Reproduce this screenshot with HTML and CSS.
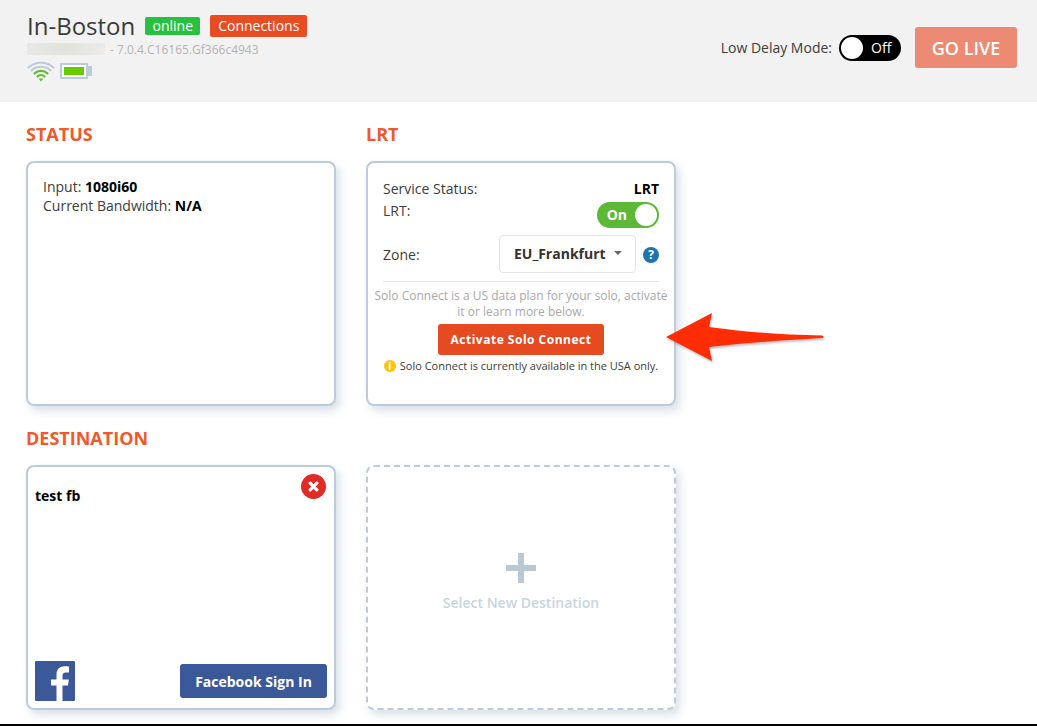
FILE: index.html
```html
<!DOCTYPE html>
<html lang="en">
<head>
<meta charset="utf-8">
<title>In-Boston</title>
<link rel="stylesheet" href="styles.css">
</head>
<body>
<div class="page">
  <header class="topbar">
    <div class="identity">
      <div class="title-row">
        <h1 class="title">In-Boston</h1>
        <span class="badge badge-online">online</span>
        <span class="badge badge-conn">Connections</span>
      </div>
      <div class="serial-row"><span class="blur-block"></span><span class="version">- 7.0.4.C16165.Gf366c4943</span></div>
      <div class="status-icons">
        <svg class="wifi" width="28" height="22" viewBox="0 0 28 22" fill="none" stroke-linecap="round">
          <path d="M1.500 7.500C8 1 20 1 26.500 7.500" stroke="#bccbdb" stroke-width="2"/>
          <path d="M4.500 10.500C9.500 5.500 18.500 5.500 23.500 10.500" stroke="#bccbdb" stroke-width="2"/>
          <path d="M7.500 13.500C11 10 17 10 20.500 13.500" stroke="#62bb2f" stroke-width="2.200"/>
          <path d="M10.500 16.500C12.500 14.700 15.500 14.700 17.500 16.500" stroke="#62bb2f" stroke-width="2.200"/>
          <path d="M11.500 18.500H16.500L14 21.500Z" fill="#62bb2f"/>
        </svg>
        <span class="battery"><span class="battery-fill"></span></span><span class="battery-tip"></span>
      </div>
    </div>
    <div class="live-controls">
      <span class="delay-label">Low Delay Mode:</span>
      <span class="toggle-off"><span class="knob"></span><span class="toggle-off-text">Off</span></span>
      <button class="go-live">GO LIVE</button>
    </div>
  </header>

  <main class="content">
    <section class="row">
      <div class="col">
        <h2 class="heading">STATUS</h2>
        <div class="card card-status">
          <div>Input: <b>1080i60</b></div>
          <div>Current Bandwidth: <b>N/A</b></div>
        </div>
      </div>
      <div class="col">
        <h2 class="heading">LRT</h2>
        <div class="card card-lrt">
          <div class="line service"><span>Service Status:</span><b class="lrt-value">LRT</b></div>
          <div class="line lrt-line"><span>LRT:</span><span class="toggle-on"><span class="toggle-on-text">On</span><span class="knob"></span></span></div>
          <div class="line zone">
            <span>Zone:</span>
            <span class="zone-controls">
              <span class="select">EU_Frankfurt<span class="caret"></span></span>
              <span class="help">?</span>
            </span>
          </div>
          <div class="solo">
            <p class="solo-text">Solo Connect is a US data plan for your solo, activate it or learn more below.</p>
            <button class="activate">Activate Solo Connect</button>
            <p class="solo-note"><span class="info">i</span>Solo Connect is currently available in the USA only.</p>
          </div>
        </div>
      </div>
    </section>
    <h2 class="heading heading-dest">DESTINATION</h2>
    <section class="row">
      <div class="card card-dest">
        <span class="close">
          <svg width="11" height="11" viewBox="0 0 10 10"><path d="M2 2L8 8M8 2L2 8" stroke="#fff" stroke-width="3" stroke-linecap="round"/></svg>
        </span>
        <div class="dest-name">test fb</div>
        <div class="dest-foot">
          <svg class="fb" width="40" height="40" viewBox="0 0 40 40">
            <rect width="40" height="40" rx="1" fill="#3b5998"/>
            <path d="M27.500 40V24.500H33L33.800 18.500H27.500V14.800C27.500 13 28.300 11.500 30.800 11.500H34V5.500C33 5.400 31.500 5.200 29.500 5.200C25 5.200 21.500 8 21.500 13.500V18.500H16V24.500H21.500V40Z" fill="#fff"/>
          </svg>
          <button class="fb-signin">Facebook Sign In</button>
        </div>
      </div>
      <div class="card card-new">
        <svg class="plus" width="30" height="30" viewBox="0 0 30 30"><path d="M12 0H18V12H30V18H18V30H12V18H0V12H12Z" fill="#bac8d6"/></svg>
        <div class="new-label">Select New Destination</div>
      </div>
    </section>
  </main>
  <svg class="arrow" width="170" height="60" viewBox="0 0 170 60">
    <path d="M1 25L47 1L44 15C80 20 120 23 157 23.500C159 24 159 26 157 26C120 28 80 31 44 35L47 49Z" fill="#ff2d05"/>
  </svg>
</div>
</body>
</html>
```
FILE: styles.css
```css
* { box-sizing: border-box; }
html, body { margin: 0; padding: 0; }
body {
  background: #000;
  font-family: "Open Sans", "Liberation Sans", sans-serif;
  font-size: 14px;
  color: #3c3c3c;
}
.page {
  position: relative;
  width: 1037px;
  height: 724px;
  background: #fff;
  overflow: hidden;
}
.topbar {
  height: 102px;
  background: #f2f2f2;
  padding: 13px 20px 0 27px;
  display: flex;
  justify-content: space-between;
  align-items: flex-start;
}
.title-row { display: flex; align-items: flex-start; height: 27px; }
.title {
  margin: 0;
  font-size: 24px;
  font-weight: 400;
  line-height: 26px;
  color: #3a3a3a;
}
.badge {
  color: #fff;
  border-radius: 2px;
  font-size: 14px;
  text-align: center;
}
.badge-online {
  background: #27c13f;
  width: 55px;
  height: 18px;
  line-height: 18px;
  margin: 4px 0 0 10px;
}
.badge-conn {
  background: #e84c22;
  width: 97px;
  height: 22px;
  line-height: 22px;
  margin: 2px 0 0 10px;
}
.serial-row { display: flex; align-items: center; height: 16px; margin-top: 1px; }
.blur-block {
  width: 78px;
  height: 12px;
  background: linear-gradient(90deg, #e8e8e6, #e0e2dc 50%, #ecebea);
}
.version { font-size: 12px; color: #b3b3b3; margin-left: 5px; }
.status-icons { display: flex; align-items: center; margin: 3px 0 0 0; }
.wifi { display: block; }
.battery {
  width: 28px;
  height: 16px;
  border: 2px solid #bccbdb;
  margin-left: 5px;
  padding: 2px;
  background: #fff;
  display: block;
}
.battery-fill { display: block; width: 100%; height: 100%; background: #66cc00; }
.battery-tip { width: 4px; height: 10px; background: #bccbdb; display: block; }
.live-controls { display: flex; align-items: center; margin-top: 14px; }
.delay-label { font-size: 14px; color: #3c3c3c; }
.toggle-off {
  width: 62px;
  height: 26px;
  background: #000;
  border-radius: 13px;
  margin-left: 7px;
  padding: 2px;
  display: flex;
  align-items: center;
}
.knob {
  width: 22px;
  height: 22px;
  background: #fff;
  border-radius: 50%;
  display: block;
  flex: none;
}
.toggle-off-text { color: #fff; font-size: 14px; margin-left: 8px; }
.go-live {
  width: 102px;
  height: 41px;
  margin-left: 14px;
  border: 0;
  border-radius: 3px;
  background: #ec8a73;
  color: #fff;
  font-family: inherit;
  font-size: 18px;
  font-weight: 600;
  padding: 0;
}
.content { padding: 21px 0 0 26px; }
.row { display: flex; gap: 30px; }
.col { width: 310px; }
.heading {
  margin: 0 0 15px;
  height: 23px;
  font-size: 18px;
  line-height: 23px;
  font-weight: 700;
  color: #f2582c;
}
.heading-dest { margin: 21px 0 15px; }
.card {
  width: 310px;
  height: 245px;
  background: #fff;
  border: 2px solid #bccbdb;
  border-radius: 8px;
  box-shadow: 4px 5px 8px rgba(150, 170, 190, .35);
}
.card b { color: #000; font-weight: 700; }
.card-status { padding: 14px 15px; line-height: 19px; }
.card-lrt { padding: 17px 15px 0; }
.line { display: flex; justify-content: space-between; }
.service { height: 18px; line-height: 18px; }
.lrt-line { height: 24px; line-height: 18px; margin-top: 4px; }
.toggle-on {
  width: 62px;
  height: 26px;
  background: #5cb836;
  border-radius: 13px;
  display: flex;
  align-items: center;
  justify-content: flex-end;
  padding: 2px;
}
.toggle-on-text { color: #fff; font-weight: 700; font-size: 14px; margin-right: 8px; }
.zone { align-items: center; height: 38px; margin-top: 9px; }
.zone-controls { display: flex; align-items: center; }
.select {
  width: 137px;
  height: 38px;
  border: 1px solid #e4e4e4;
  border-radius: 4px;
  background: #fff;
  display: flex;
  align-items: center;
  padding: 0 0 2px 14px;
  font-weight: 700;
  color: #333;
  font-size: 14px;
}
.caret {
  width: 0;
  height: 0;
  border: 4px solid transparent;
  border-top-color: #666;
  border-bottom: 0;
  margin-left: 8px;
}
.help {
  width: 16px;
  height: 16px;
  margin: 2px 0 0 7px;
  border-radius: 50%;
  background: #1f74ad;
  color: #fff;
  font-size: 12px;
  font-weight: 700;
  line-height: 16px;
  text-align: center;
}
.solo {
  margin: 8px -9px 0;
  text-align: center;
  position: relative;
  padding-top: 1px;
}
.solo::before {
  content: "";
  position: absolute;
  top: 0;
  left: 9px;
  right: 9px;
  height: 1px;
  background: #e3e6ec;
}
.solo-text {
  margin: 6px 0 0;
  font-size: 12px;
  line-height: 16px;
  color: #a9a9a9;
}
.activate {
  display: block;
  width: 166px;
  height: 31px;
  margin: 4px auto 0;
  border: 0;
  border-radius: 3px;
  background: #e64a21;
  color: #fff;
  font-family: inherit;
  font-size: 12px;
  font-weight: 700;
  letter-spacing: .5px;
  padding: 0;
}
.solo-note {
  margin: 3px 0 0;
  font-size: 11px;
  line-height: 16px;
  color: #3c3c3c;
  display: flex;
  justify-content: center;
  align-items: center;
}
.info {
  width: 12px;
  height: 12px;
  border-radius: 50%;
  background: #fcc40f;
  color: #fff;
  font-size: 10px;
  font-weight: 700;
  line-height: 12px;
  text-align: center;
  margin-right: 4px;
}
.card-dest {
  position: relative;
  padding: 20px 7px 7px 7px;
  display: flex;
  flex-direction: column;
  justify-content: space-between;
}
.dest-name { font-weight: 700; color: #000; line-height: 18px; font-size: 14px; }
.close {
  position: absolute;
  top: 7px;
  right: 8px;
  width: 25px;
  height: 25px;
  border-radius: 50%;
  background: #e02b27;
  display: flex;
  align-items: center;
  justify-content: center;
}
.dest-foot { display: flex; justify-content: space-between; align-items: center; }
.fb { display: block; }
.fb-signin {
  width: 147px;
  height: 34px;
  border: 0;
  border-radius: 3px;
  background: #3b5998;
  color: #fff;
  font-family: inherit;
  font-size: 14px;
  font-weight: 700;
  padding: 0;
}
.card-new {
  border-style: dashed;
  display: flex;
  flex-direction: column;
  align-items: center;
  padding-top: 86px;
}
.plus { display: block; }
.new-label { margin-top: 10px; font-size: 14px; font-weight: 600; color: #c9d4e0; line-height: 19px; }
.arrow {
  position: absolute;
  left: 665px;
  top: 312px;
  filter: drop-shadow(1px 2px 1px rgba(0, 0, 0, .25));
}
```
